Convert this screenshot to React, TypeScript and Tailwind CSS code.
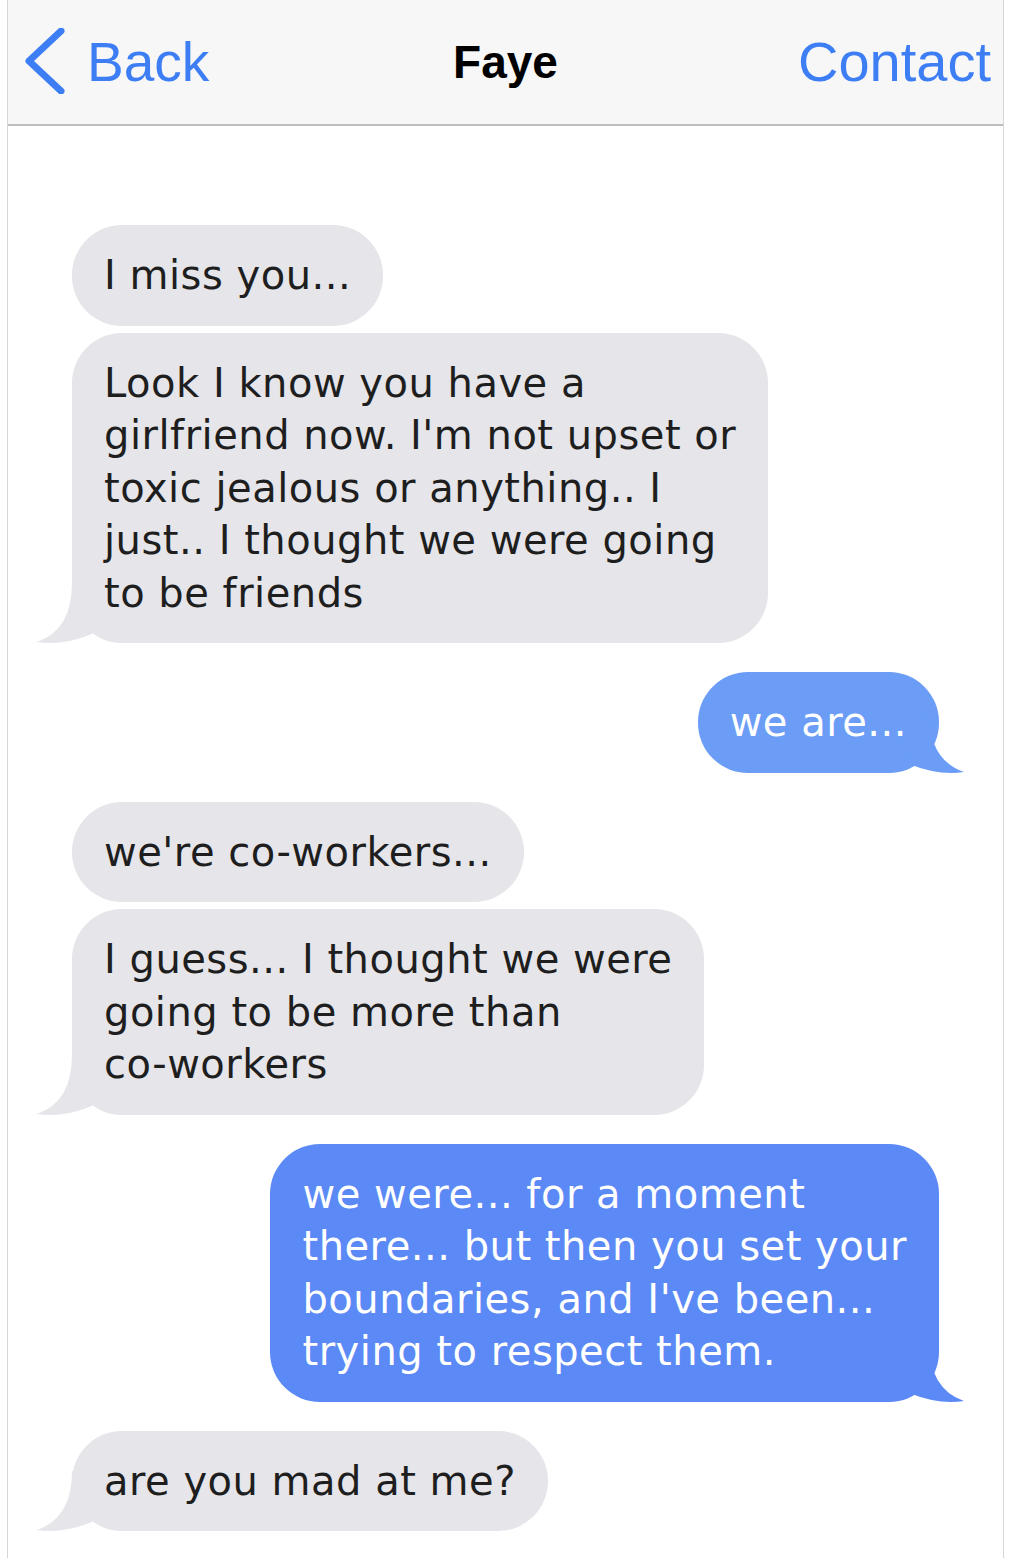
type Message = {
  from: 'them' | 'me';
  lines: string[];
  tail?: boolean;
  tone?: string;
};

const messages: Message[] = [
  { from: 'them', lines: ['I miss you...'] },
  {
    from: 'them',
    tail: true,
    lines: [
      'Look I know you have a',
      "girlfriend now. I'm not upset or",
      'toxic jealous or anything.. I',
      'just.. I thought we were going',
      'to be friends',
    ],
  },
  { from: 'me', tail: true, tone: '#6b9df6', lines: ['we are...'] },
  { from: 'them', lines: ["we're co-workers..."] },
  {
    from: 'them',
    tail: true,
    lines: ['I guess... I thought we were', 'going to be more than', 'co-workers'],
  },
  {
    from: 'me',
    tail: true,
    tone: '#5b89f5',
    lines: [
      'we were... for a moment',
      'there... but then you set your',
      "boundaries, and I've been...",
      'trying to respect them.',
    ],
  },
  { from: 'them', tail: true, lines: ['are you mad at me?'] },
];

// little curled tail hanging off the bottom corner of a bubble
function Tail({ color, side }: { color: string; side: 'left' | 'right' }) {
  return (
    <svg
      width="90"
      height="74"
      viewBox="0 0 90 74"
      className={
        side === 'left'
          ? 'absolute left-[-36px] bottom-[-4px]'
          : 'absolute right-[-26px] bottom-[-4px] -scale-x-100'
      }
    >
      <path d="M36 10 Q36 57 1 69 Q26 73 56 61 L64 27 Z" fill={color} />
    </svg>
  );
}

function Bubble({ msg }: { msg: Message }) {
  const mine = msg.from === 'me';
  const color = mine ? msg.tone ?? '#5b89f5' : '#e5e5ea';
  return (
    <div className={mine ? 'flex justify-end' : 'flex justify-start'}>
      <div
        className={`relative rounded-[50px] px-8 py-6 text-[40px] leading-[52.5px] tracking-[0.5px] ${
          mine ? 'text-white' : 'text-[#1e1e1e]'
        }`}
        style={{ backgroundColor: color }}
      >
        {msg.lines.map((line, i) => (
          <div key={i} className="relative z-10 whitespace-nowrap">
            {line}
          </div>
        ))}
        {msg.tail && <Tail color={color} side={mine ? 'right' : 'left'} />}
      </div>
    </div>
  );
}

export default function App() {
  return (
    <div className="min-h-screen bg-white">
      <div className="ml-[7px] w-[997px] min-h-[1558px] border-x border-[#d6d6d6] bg-white">
        {/* Nav bar */}
        <header className="relative flex h-[126px] items-center justify-between border-b-2 border-[#bdbdbd] bg-[#f7f7f7] pl-[17px] pr-[12px] font-['Liberation_Sans',Arial,sans-serif]">
          <div className="flex items-center text-[#3d7ef5]">
            <svg width="40" height="66" viewBox="0 0 40 66" className="mr-[22px] mb-[2px]">
              <polyline
                points="36,3 4,33 36,63"
                fill="none"
                stroke="currentColor"
                strokeWidth="7"
                strokeLinecap="round"
                strokeLinejoin="round"
              />
            </svg>
            <span className="text-[55px] leading-none">Back</span>
          </div>
          <h1 className="absolute left-1/2 -translate-x-1/2 text-[46px] font-bold leading-none text-black">
            Faye
          </h1>
          <span className="text-[56px] leading-none text-[#3d7ef5]">Contact</span>
        </header>

        {/* Conversation */}
        <div className="flex flex-col px-16 pt-[99px] pb-6 font-['DejaVu_Sans',Verdana,sans-serif]">
          {messages.map((msg, i) => {
            const prev = messages[i - 1];
            const gap = !prev ? '' : prev.from === msg.from ? 'mt-[7px]' : 'mt-[29px]';
            return (
              <div key={i} className={gap}>
                <Bubble msg={msg} />
              </div>
            );
          })}
        </div>
      </div>
    </div>
  );
}
